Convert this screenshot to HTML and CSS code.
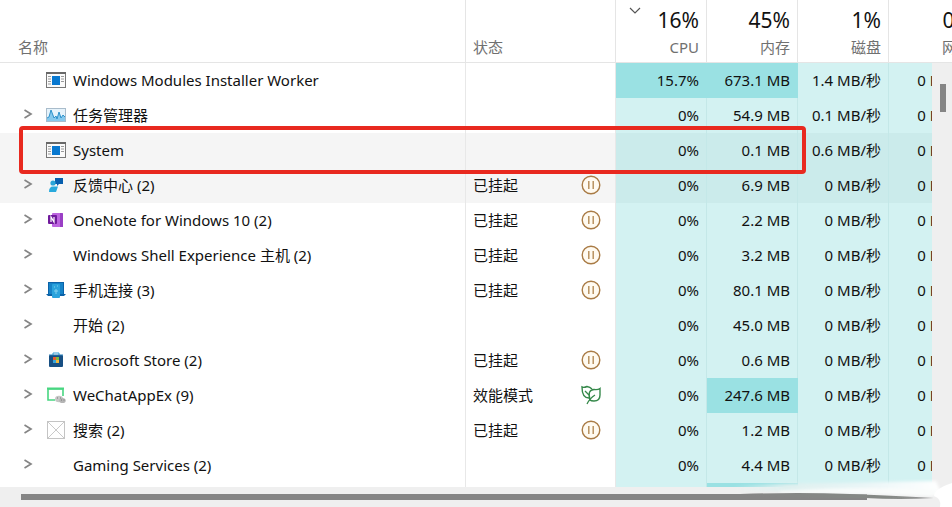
FILE: index.html
```
<!DOCTYPE html>
<html lang="zh-CN">
<head>
  <meta charset="UTF-8">
  <meta name="viewport" content="width=device-width, initial-scale=1.0">
  <title>任务管理器</title>
  <link rel="stylesheet" href="styles.css">
</head>
<body>
  <!-- shared icons -->
  <svg class="defs" width="0" height="0">
    <symbol id="arrow" viewBox="0 0 10 12"><path d="M1.5 2 L8 6 L1.5 10" fill="none" stroke="#858585" stroke-width="1.7"/></symbol>
    <symbol id="pause" viewBox="0 0 20 20"><circle cx="10" cy="10" r="8.8" fill="#fffaf0" stroke="#a97b45" stroke-width="1.4"/><path d="M7.8 6 V14 M12.2 6 V14" stroke="#b48a55" stroke-width="1.4"/></symbol>
    <symbol id="app" viewBox="0 0 20 16"><rect x=".5" y=".5" width="19" height="15" fill="#fafafa" stroke="#777"/><path d="M0 1 H20" stroke="#686868" stroke-width="2"/><path d="M2 4.5 H5 M2 7 H5 M2 9.5 H5 M2 12 H5 M15 4.5 H18 M15 7 H18 M15 9.5 H18" stroke="#9a9a9a"/><rect x="6" y="4" width="8" height="9" fill="#0878d0"/></symbol>
  </svg>

  <main class="processes">
    <table class="grid">
      <colgroup>
        <col class="col-name"><col class="col-status"><col class="col-num"><col class="col-num"><col class="col-num"><col class="col-num">
      </colgroup>
      <thead>
        <tr>
          <th class="left name-head" scope="col">名称</th>
          <th class="left" scope="col">状态</th>
          <th scope="col" aria-sort="descending"><svg class="sort" width="12" height="8" viewBox="0 0 12 8"><path d="M1 1 L6 6 L11 1" fill="none" stroke="#555" stroke-width="1.2"/></svg><strong>16%</strong>CPU</th>
          <th scope="col"><strong>45%</strong>内存</th>
          <th scope="col"><strong>1%</strong>磁盘</th>
          <th scope="col"><strong>0%</strong>网络</th>
        </tr>
      </thead>
      <tbody>
        <tr>
          <td><div class="name"><span class="toggle"></span><span class="icon"><svg width="20" height="16"><use href="#app"/></svg></span>Windows Modules Installer Worker</div></td>
          <td></td><td class="num high">15.7%</td><td class="num high">673.1 MB</td><td class="num">1.4 MB/秒</td><td class="num net">0 Mbps</td>
        </tr>
        <tr>
          <td><div class="name"><button class="toggle" aria-label="展开"><svg width="10" height="12"><use href="#arrow"/></svg></button><span class="icon"><svg width="20" height="14" viewBox="0 0 20 14"><rect x=".5" y=".5" width="19" height="13" fill="#e6f3fb" stroke="#a9bccb"/><path d="M1 13 V10 L3 9 L5 2 L8 10 L10 8 L11 11 L13 4 L15 10 L17 7 L19 9 V13Z" fill="#86c9ed"/><path d="M1 10 L3 9 L5 2 L8 10 L10 8 L11 11 L13 4 L15 10 L17 7 L19 9" fill="none" stroke="#2d92cc"/></svg></span>任务管理器</div></td>
          <td></td><td class="num">0%</td><td class="num">54.9 MB</td><td class="num">0.1 MB/秒</td><td class="num net">0 Mbps</td>
        </tr>
        <tr class="selected">
          <td><div class="name"><span class="toggle"></span><span class="icon"><svg width="20" height="16"><use href="#app"/></svg></span>System</div></td>
          <td></td><td class="num">0%</td><td class="num">0.1 MB</td><td class="num">0.6 MB/秒</td><td class="num net">0 Mbps</td>
        </tr>
        <tr class="selected">
          <td><div class="name"><button class="toggle" aria-label="展开"><svg width="10" height="12"><use href="#arrow"/></svg></button><span class="icon"><svg width="16" height="16" viewBox="0 0 16 16"><path d="M7 1 H15 V7 H11 L9 9 V7 H7Z" fill="#075fae"/><circle cx="5" cy="6" r="2.6" fill="#2aa5d8"/><path d="M1 15 Q1 9.5 5 9.5 H10 L8 15Z" fill="#28a9dc"/></svg></span>反馈中心 (2)</div></td>
          <td><div class="status">已挂起<svg width="20" height="20"><use href="#pause"/></svg></div></td><td class="num">0%</td><td class="num">6.9 MB</td><td class="num">0 MB/秒</td><td class="num net">0 Mbps</td>
        </tr>
        <tr>
          <td><div class="name"><button class="toggle" aria-label="展开"><svg width="10" height="12"><use href="#arrow"/></svg></button><span class="icon"><svg width="16" height="16" viewBox="0 0 16 16"><rect x="4" y="1" width="11" height="14" rx="1" fill="#bd65df"/><path d="M12 1 H14 Q15 1 15 2 V15 H12Z" fill="#9a3fc5"/><rect x="0" y="3" width="9" height="9" rx="1" fill="#701a9c"/><path d="M3 10 V5 L6 10 V5" fill="none" stroke="#fff" stroke-width="1.2"/></svg></span>OneNote for Windows 10 (2)</div></td>
          <td><div class="status">已挂起<svg width="20" height="20"><use href="#pause"/></svg></div></td><td class="num">0%</td><td class="num">2.2 MB</td><td class="num">0 MB/秒</td><td class="num net">0 Mbps</td>
        </tr>
        <tr>
          <td><div class="name"><button class="toggle" aria-label="展开"><svg width="10" height="12"><use href="#arrow"/></svg></button><span class="icon"></span>Windows Shell Experience 主机 (2)</div></td>
          <td><div class="status">已挂起<svg width="20" height="20"><use href="#pause"/></svg></div></td><td class="num">0%</td><td class="num">3.2 MB</td><td class="num">0 MB/秒</td><td class="num net">0 Mbps</td>
        </tr>
        <tr>
          <td><div class="name"><button class="toggle" aria-label="展开"><svg width="10" height="12"><use href="#arrow"/></svg></button><span class="icon"><svg width="20" height="18" viewBox="0 0 20 18"><path d="M2 1 H18 V13 H20 L18 15 H2 L0 13 H2Z" fill="#0b62a8"/><path d="M3 2 H17 V13 H3Z" fill="#1683c8"/><rect x="6" y="3" width="8" height="14" rx="1" fill="#2ba3dc"/><path d="M8 6 H9 M11 5 H12 M8 10 H12 M10 8 V13" stroke="#81d1ef"/></svg></span>手机连接 (3)</div></td>
          <td><div class="status">已挂起<svg width="20" height="20"><use href="#pause"/></svg></div></td><td class="num">0%</td><td class="num">80.1 MB</td><td class="num">0 MB/秒</td><td class="num net">0 Mbps</td>
        </tr>
        <tr>
          <td><div class="name"><button class="toggle" aria-label="展开"><svg width="10" height="12"><use href="#arrow"/></svg></button><span class="icon"></span>开始 (2)</div></td>
          <td></td><td class="num">0%</td><td class="num">45.0 MB</td><td class="num">0 MB/秒</td><td class="num net">0 Mbps</td>
        </tr>
        <tr>
          <td><div class="name"><button class="toggle" aria-label="展开"><svg width="10" height="12"><use href="#arrow"/></svg></button><span class="icon"><svg width="16" height="16" viewBox="0 0 16 16"><path d="M5 3 V1 H11 V3" fill="none" stroke="#329bd4"/><rect x="1" y="3" width="14" height="12" rx="1" fill="#174f83"/><path d="M1 3 H15" stroke="#287eb8"/><path d="M5 5 H8 V8 H5Z" fill="#e65b32"/><path d="M8 5 H11 V8 H8Z" fill="#80b840"/><path d="M5 8 H8 V11 H5Z" fill="#36a4dc"/><path d="M8 8 H11 V11 H8Z" fill="#efb83c"/></svg></span>Microsoft Store (2)</div></td>
          <td><div class="status">已挂起<svg width="20" height="20"><use href="#pause"/></svg></div></td><td class="num">0%</td><td class="num">0.6 MB</td><td class="num">0 MB/秒</td><td class="num net">0 Mbps</td>
        </tr>
        <tr>
          <td><div class="name"><button class="toggle" aria-label="展开"><svg width="10" height="12"><use href="#arrow"/></svg></button><span class="icon"><svg width="20" height="18" viewBox="0 0 20 18"><path d="M9 14 H2 V3 H17 V10" fill="none" stroke="#48d681" stroke-width="1.6"/><path d="M1 2.5 H18" stroke="#48d681" stroke-width="2"/><ellipse cx="13" cy="13" rx="4" ry="3.3" fill="#c6c6c6"/><ellipse cx="16.5" cy="14.5" rx="3.2" ry="2.6" fill="#b5b5b5"/><path d="M11 12 H12 M14 12 H15 M15 14 H16 M17.5 14 H18.5" stroke="#777"/></svg></span>WeChatAppEx (9)</div></td>
          <td><div class="status">效能模式<svg width="20" height="20" viewBox="0 0 20 20"><path d="M8 13 Q1 13 1 2 Q3 3 6 1.5 Q9 2 11 4" fill="none" stroke="#35884a" stroke-width="1.4"/><path d="M9 15 Q6 5 13 4.5 Q17 5 19 3.5 V10 Q19 16 13 16 Q10 16 9 15Z" fill="none" stroke="#35884a" stroke-width="1.4"/><path d="M4 6 L8 10 M6 19 Q9 13 14 10" fill="none" stroke="#35884a" stroke-width="1.3"/></svg></div></td><td class="num">0%</td><td class="num high">247.6 MB</td><td class="num">0 MB/秒</td><td class="num net">0 Mbps</td>
        </tr>
        <tr>
          <td><div class="name"><button class="toggle" aria-label="展开"><svg width="10" height="12"><use href="#arrow"/></svg></button><span class="icon"><svg width="18" height="18" viewBox="0 0 18 18"><rect x=".5" y=".5" width="17" height="17" fill="#fff" stroke="#c4c4c4"/><path d="M1 1 L17 17 M17 1 L1 17" stroke="#c9c9c9"/></svg></span>搜索 (2)</div></td>
          <td><div class="status">已挂起<svg width="20" height="20"><use href="#pause"/></svg></div></td><td class="num">0%</td><td class="num">1.2 MB</td><td class="num">0 MB/秒</td><td class="num net">0 Mbps</td>
        </tr>
        <tr>
          <td><div class="name"><button class="toggle" aria-label="展开"><svg width="10" height="12"><use href="#arrow"/></svg></button><span class="icon"></span>Gaming Services (2)</div></td>
          <td></td><td class="num">0%</td><td class="num">4.4 MB</td><td class="num">0 MB/秒</td><td class="num net">0 Mbps</td>
        </tr>
        <tr><td></td><td></td><td class="num"></td><td class="num high"></td><td class="num"></td><td class="num"></td></tr>
      </tbody>
    </table>
    <div class="scroll-y"><div class="thumb-y"></div></div>
    <div class="highlight"></div>
  </main>

  <footer class="scroll-x">
    <div class="thumb-x"></div>
    <!-- brushed-out strip in the corner -->
    <svg class="smear" width="232" height="32" viewBox="0 0 232 32">
      <defs>
        <linearGradient id="fade" x1="0" x2="1" y1="0" y2="0"><stop offset="0" stop-color="#e5f3f2" stop-opacity="0"/><stop offset=".25" stop-color="#dff0ef"/><stop offset=".6" stop-color="#e9f5f6"/><stop offset="1" stop-color="#fff"/></linearGradient>
        <linearGradient id="edge" x1="0" x2="1" y1="0" y2="0"><stop offset="0" stop-color="#858585"/><stop offset=".75" stop-color="#858985"/><stop offset="1" stop-color="#777" stop-opacity=".7"/></linearGradient>
        <filter id="soft"><feGaussianBlur stdDeviation="1.5"/></filter>
        <filter id="slight"><feGaussianBlur stdDeviation=".5"/></filter>
      </defs>
      <path d="M14 11 Q60 8 120 8 L216 6 L222 20 Q150 17 100 17 Q50 16 14 17Z" fill="url(#fade)" filter="url(#soft)"/>
      <path d="M60 16 Q140 11 218 15 L212 21 Q150 18 60 18Z" fill="#fafcfb" filter="url(#soft)"/>
      <path d="M20 19 Q80 17 130 19 T214 23 Q180 25 145 23 Q80 23 20 20Z" fill="url(#edge)" filter="url(#slight)"/>
      <path d="M232 8 Q214 14 214 21 Q222 24 220 32 H232Z" fill="#fff" filter="url(#slight)"/>
    </svg>
  </footer>
</body>
</html>
```
FILE: styles.css
```
* { box-sizing: border-box; }
body {
  margin: 0;
  height: 100vh;
  display: flex;
  flex-direction: column;
  overflow: hidden;
  background: #fff;
  color: #111;
  font: 15px/20px "Noto Sans", "Noto Sans CJK SC", sans-serif;
}
.defs { position: absolute; }
.processes {
  position: relative;
  flex: 1;
  min-height: 0;
  overflow: hidden;
}
.grid {
  width: calc(100% + 28px);
  table-layout: fixed;
  border-collapse: separate;
  border-spacing: 0;
}
.col-status { width: 150px; }
.col-num { width: 91px; }
th {
  position: relative;
  height: 63px;
  padding: 0 7px 5px;
  border-right: 1px solid #e5e5e5;
  border-bottom: 1px solid #e5e5e5;
  vertical-align: bottom;
  text-align: right;
  font-size: 15px;
  font-weight: normal;
  color: #707070;
}
th strong {
  display: block;
  margin-bottom: 5px;
  font-size: 21px;
  line-height: 24px;
  font-weight: normal;
  color: #111;
}
.left { text-align: left; }
.name-head { padding-left: 18px; }
.sort { position: absolute; top: 7px; left: 13px; }
td {
  height: 35px;
  padding: 0 7px 2px;
  border-right: 1px solid #e8e8e8;
}
.name { display: flex; align-items: center; padding-left: 13px; white-space: nowrap; }
.toggle {
  display: flex;
  justify-content: center;
  width: 16px;
  padding: 0 0 2px;
  border: 0;
  background: none;
}
.icon {
  display: flex;
  justify-content: center;
  width: 20px;
  margin: 0 7px 0 10px;
}
.status { display: flex; justify-content: space-between; align-items: center; padding-right: 7px; }
.num {
  background: #d3f2f2;
  border-color: #c4e8e8;
  text-align: right;
  white-space: nowrap;
}
.net { padding-right: 10px; }
.high { background: #9ae1e3; border-color: #9ae1e3; }
.selected td { background: #f5f5f5; }
.selected .num { background: #cbebeb; }
.highlight {
  position: absolute;
  top: 126px;
  left: 19px;
  right: 146px;
  height: 48px;
  border: 4px solid #e8291f;
  border-radius: 4px;
}
.scroll-y {
  position: absolute;
  top: 63px;
  right: 0;
  bottom: 0;
  width: 20px;
  padding: 21px 6px 0 8px;
  background: #efefef;
}
.thumb-y { height: 28px; background: #858585; }
.scroll-x {
  position: relative;
  height: 20px;
  padding: 7px 85px 7px 21px;
  background: #efefef;
}
.thumb-x { height: 6px; background: #858585; }
.smear { position: absolute; right: 0; bottom: 0; }
```
